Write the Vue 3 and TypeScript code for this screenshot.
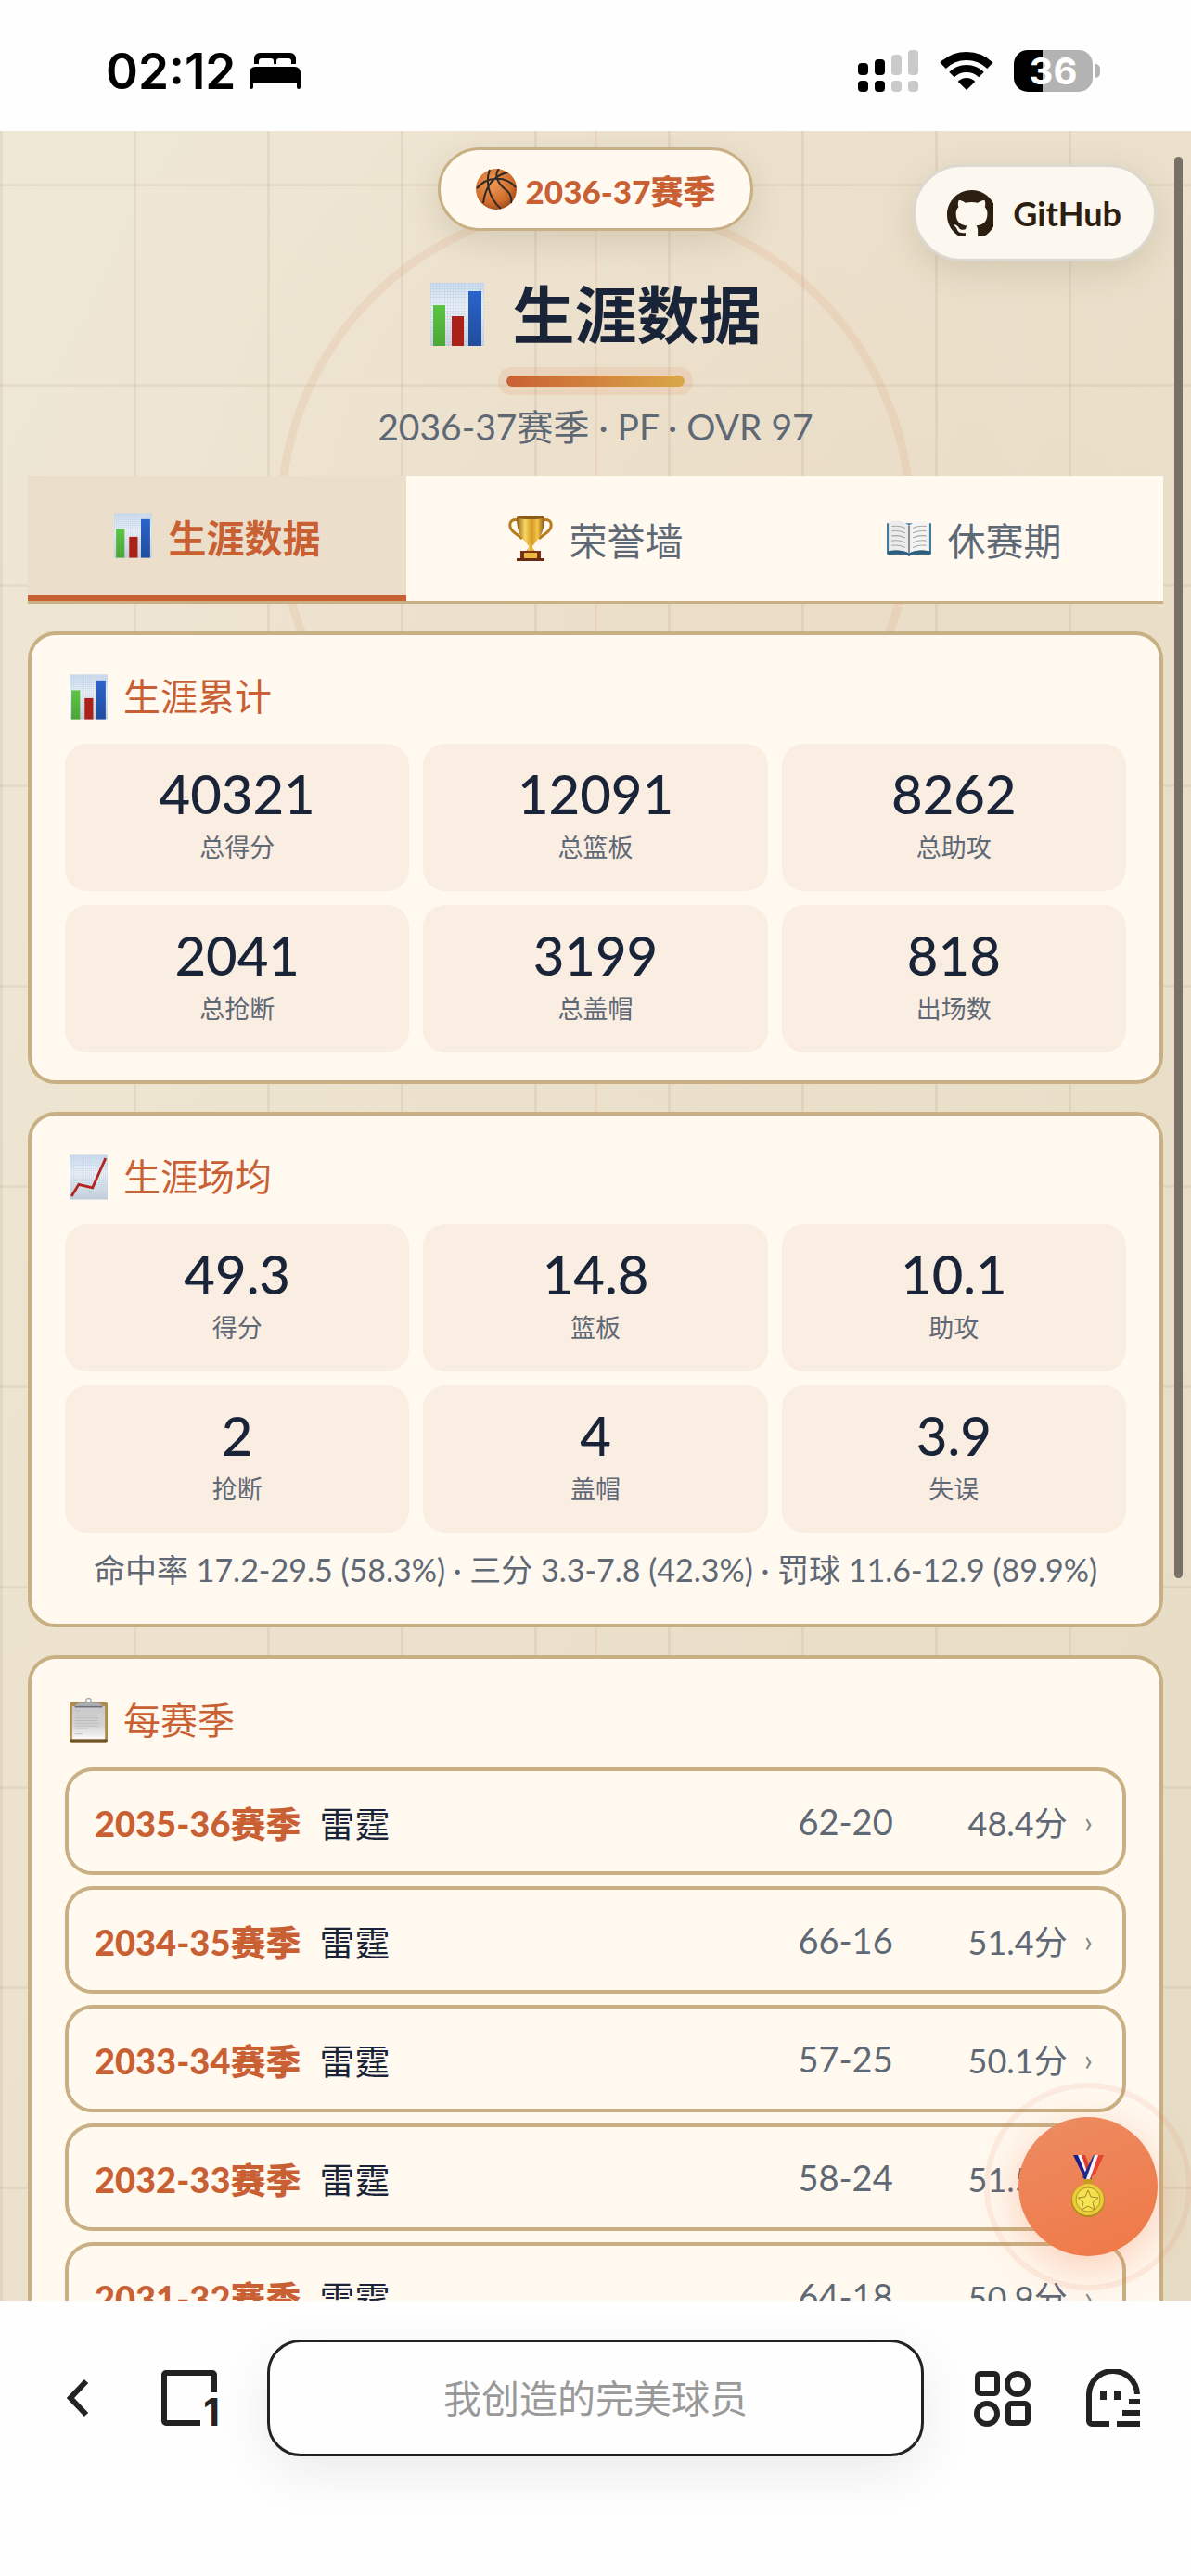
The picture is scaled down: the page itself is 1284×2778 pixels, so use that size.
<script setup lang="ts">
interface Stat {
  value: string
  label: string
}

interface Season {
  name: string
  team: string
  record: string
  points: string
}

interface Tab {
  icon: string
  label: string
}

const tabs: Tab[] = [
  { icon: 'bars', label: '生涯数据' },
  { icon: 'trophy', label: '荣誉墙' },
  { icon: 'book', label: '休赛期' },
]

const totals: Stat[] = [
  { value: '40321', label: '总得分' },
  { value: '12091', label: '总篮板' },
  { value: '8262', label: '总助攻' },
  { value: '2041', label: '总抢断' },
  { value: '3199', label: '总盖帽' },
  { value: '818', label: '出场数' },
]

const averages: Stat[] = [
  { value: '49.3', label: '得分' },
  { value: '14.8', label: '篮板' },
  { value: '10.1', label: '助攻' },
  { value: '2', label: '抢断' },
  { value: '4', label: '盖帽' },
  { value: '3.9', label: '失误' },
]

const seasons: Season[] = [
  { name: '2035-36赛季', team: '雷霆', record: '62-20', points: '48.4分' },
  { name: '2034-35赛季', team: '雷霆', record: '66-16', points: '51.4分' },
  { name: '2033-34赛季', team: '雷霆', record: '57-25', points: '50.1分' },
  { name: '2032-33赛季', team: '雷霆', record: '58-24', points: '51.5分' },
  { name: '2031-32赛季', team: '雷霆', record: '64-18', points: '50.9分' },
]
</script>

<template>
  <div class="phone">
    <svg class="sprite" aria-hidden="true">
      <defs>
        <linearGradient id="paper" x1="0" y1="0" x2="0" y2="1">
          <stop offset="0" stop-color="#cddcec" />
          <stop offset="0.4" stop-color="#eef2f8" />
          <stop offset="1" stop-color="#c9d0da" />
        </linearGradient>
        <pattern id="mesh" width="3" height="3" patternUnits="userSpaceOnUse">
          <path d="M0 0H3M0 0V3" stroke="#a9c3df" stroke-width="1" opacity="0.6" />
        </pattern>
        <linearGradient id="green" x1="0" y1="0" x2="0" y2="1">
          <stop offset="0" stop-color="#5cc544" /><stop offset="1" stop-color="#4aa636" />
        </linearGradient>
        <linearGradient id="blue" x1="0" y1="0" x2="0" y2="1">
          <stop offset="0" stop-color="#2a64cc" /><stop offset="1" stop-color="#214c9c" />
        </linearGradient>
        <radialGradient id="ball" cx="0.4" cy="0.35" r="0.7">
          <stop offset="0" stop-color="#f09a55" /><stop offset="0.7" stop-color="#cf6c2c" />
          <stop offset="1" stop-color="#9c4718" />
        </radialGradient>
        <linearGradient id="gold" x1="0" y1="0" x2="1" y2="0">
          <stop offset="0" stop-color="#8f5a10" /><stop offset="0.3" stop-color="#f7d765" />
          <stop offset="0.55" stop-color="#d99a24" /><stop offset="0.75" stop-color="#f3c74c" />
          <stop offset="1" stop-color="#85500d" />
        </linearGradient>
        <linearGradient id="sheet" x1="0" y1="0" x2="0" y2="1">
          <stop offset="0" stop-color="#c9c9c9" /><stop offset="0.6" stop-color="#d4d4d4" />
          <stop offset="1" stop-color="#fafafa" />
        </linearGradient>
      </defs>

      <symbol id="icon-bars" viewBox="0 0 58 68">
        <rect width="58" height="68" fill="url(#paper)" />
        <rect width="58" height="68" fill="url(#mesh)" />
        <rect x="3" y="24" width="13" height="44" fill="url(#green)" />
        <rect x="23" y="36" width="13" height="32" fill="#ab2118" />
        <rect x="41" y="9" width="14" height="59" fill="url(#blue)" />
      </symbol>

      <symbol id="icon-line" viewBox="0 0 58 68">
        <rect width="58" height="68" fill="url(#paper)" />
        <rect width="58" height="68" fill="url(#mesh)" />
        <path d="M3 63L14 45L35 50L55 5" fill="none" stroke="#b3241c" stroke-width="4" />
      </symbol>

      <symbol id="icon-clip" viewBox="0 0 58 68">
        <rect y="6" width="58" height="62" rx="3" fill="#b08a4a" />
        <rect x="0" y="62" width="58" height="6" rx="3" fill="#6f5526" />
        <rect x="4" y="12" width="50" height="50" fill="url(#sheet)" />
        <path d="M8 19h8M8 26h34M8 30h36M8 34h35M8 38h37M8 42h36M8 46h20M8 54h12" stroke="#b4b4b4" stroke-width="1" />
        <circle cx="29" cy="4" r="4" fill="none" stroke="#9fb0bd" stroke-width="2" />
        <path d="M8 14c0-5 4-7 9-7h24c5 0 9 2 9 7z" fill="#a9adb6" />
        <path d="M8 13h42" stroke="#6b6e75" stroke-width="2" />
      </symbol>

      <symbol id="icon-trophy" viewBox="0 0 48 49">
        <path d="M11 5C4 3 1 7 2 12c1 6 8 8 13 13M37 5c7-2 10 2 9 7-1 6-8 8-13 13" fill="none" stroke="#b67a1b" stroke-width="3" />
        <path d="M9 2h30c0 12-3 20-9 26l-4 5h-4l-4-5C12 22 9 14 9 2z" fill="url(#gold)" />
        <ellipse cx="24" cy="2" rx="15" ry="2" fill="#8a5a16" />
        <path d="M22 31h4v3l3 5H19l3-5z" fill="url(#gold)" />
        <path d="M13 38h22v9H13z" fill="#7a3015" />
        <rect x="17" y="40" width="14" height="6" fill="#e8b83d" />
        <rect x="9" y="46" width="30" height="3" fill="#6a2a13" />
      </symbol>

      <symbol id="icon-book" viewBox="0 0 46 37">
        <path d="M0 3h46v32H27l-4 2-4-2H0z" fill="#3c7c9f" />
        <path d="M2 1c8-2 16 0 21 4v29c-5-3-13-4-21-2z" fill="#ececec" />
        <path d="M44 1c-8-2-16 0-21 4v29c5-3 13-4 21-2z" fill="#f4f4f4" />
        <path d="M23 5v29" stroke="#8c8c8c" stroke-width="2" />
        <path d="M5 6q8-1 14 2M5 11q8-1 14 2M5 16q8-1 14 2M5 21q8-1 14 2M5 26q8-1 14 2M27 8q6-3 14-2M27 13q6-3 14-2M27 18q6-3 14-2M27 23q6-3 14-2M27 28q6-3 14-2" fill="none" stroke="#a6a6a6" stroke-width="1" />
        <path d="M1 32c8-2 16-1 22 2 6-3 14-4 22-2v3H27l-4 2-4-2H1z" fill="#2b5f7d" />
      </symbol>

      <symbol id="icon-ball" viewBox="0 0 44 44">
        <circle cx="22" cy="22" r="22" fill="url(#ball)" />
        <path d="M1 21C12 8 32 7 43 20M15 1C10 14 14 32 27 43M25 0c-7 8 1 18 9 24 3 3 5 7 4 13M8 37C10 20 18 8 34 4" fill="none" stroke="#2f2a26" stroke-width="2" />
      </symbol>

      <symbol id="icon-medal" viewBox="0 0 36 68">
        <path d="M2 0h10l10 26-6 3z" fill="#1b1f86" /><path d="M7 0h5l9 25-3 1z" fill="#f4f4f4" />
        <path d="M11 0h4l5 14-2 8z" fill="#e23a2e" />
        <path d="M34 0H24L12 24l5 4z" fill="#202a8c" /><path d="M25 0h6L20 26l-4 0z" fill="#f4f4f4" />
        <path d="M29 0h6l-9 20-6 6z" fill="#e8432f" />
        <rect x="13" y="26" width="10" height="5" rx="2" fill="#c99b25" />
        <circle cx="18" cy="49" r="18" fill="#b08a1e" />
        <circle cx="18" cy="48" r="17" fill="#e9cd38" />
        <circle cx="18" cy="48" r="13" fill="#f3e14e" stroke="#b9952a" stroke-width="1" />
        <path d="M18 38l3 7 8 1-6 5 2 8-7-4-7 4 2-8-6-5 8-1z" fill="#f6e653" stroke="#a68528" stroke-width="1" />
      </symbol>
    </svg>

    <header class="status">
      <div class="status-side">
        <time class="clock">02:12</time>
        <svg class="bed" viewBox="0 0 55 39" aria-label="睡眠模式">
          <path d="M5 12V6a6 6 0 0 1 6-6h33a6 6 0 0 1 6 6v6h-5V9a3 3 0 0 0-3-3H32a3 3 0 0 0-3 3v3h-3V9a3 3 0 0 0-3-3H13a3 3 0 0 0-3 3v3z" />
          <path d="M0 21a6 6 0 0 1 6-6h43a6 6 0 0 1 6 6v16a2 2 0 0 1-4 0v-4H4v4a2 2 0 0 1-4 0z" />
        </svg>
      </div>
      <div class="status-side">
        <svg class="signal" viewBox="0 0 65 45" aria-label="信号">
          <g fill="#000">
            <rect x="0" y="14" width="11" height="13" rx="4" /><rect x="18" y="10" width="11" height="17" rx="4" />
            <rect x="0" y="33" width="11" height="12" rx="4" /><rect x="18" y="33" width="11" height="12" rx="4" />
          </g>
          <g fill="#cacaca">
            <rect x="36" y="5" width="11" height="22" rx="4" /><rect x="54" y="0" width="11" height="27" rx="4" />
            <rect x="36" y="33" width="11" height="12" rx="4" /><rect x="54" y="33" width="11" height="12" rx="4" />
          </g>
        </svg>
        <svg class="wifi" viewBox="0 0 58 43" aria-label="无线网络">
          <path d="M3.600 15.700A36.500 36.500 0 0 1 54.400 15.700" fill="none" stroke="#000" stroke-width="9" />
          <path d="M13 25.500A23 23 0 0 1 45 25.500" fill="none" stroke="#000" stroke-width="8" />
          <path d="M29 42L19.700 33A13 13 0 0 1 38.300 33z" />
        </svg>
        <div class="battery"><span class="cell">36</span><span class="nub"></span></div>
      </div>
    </header>

    <main class="page">
      <div class="court" aria-hidden="true"></div>

      <a class="github" href="#">
        <svg viewBox="0 0 92 92" aria-hidden="true">
          <path d="M48.854 0C21.839 0 0 22 0 49.217c0 21.756 13.993 40.172 33.405 46.69 2.427.49 3.316-1.059 3.316-2.362 0-1.141-.08-5.052-.08-9.127-13.59 2.934-16.42-5.867-16.42-5.867-2.184-5.704-5.42-7.17-5.42-7.17-4.448-3.015.324-3.015.324-3.015 4.934.326 7.523 5.052 7.523 5.052 4.367 7.496 11.404 5.378 14.235 4.074.404-3.178 1.699-5.378 3.074-6.6-10.839-1.141-22.243-5.378-22.243-24.283 0-5.378 1.94-9.778 5.014-13.2-.485-1.222-2.184-6.275.486-13.038 0 0 4.125-1.304 13.426 5.052a46.97 46.97 0 0 1 12.214-1.63c4.125 0 8.33.571 12.213 1.63 9.302-6.356 13.427-5.052 13.427-5.052 2.67 6.763.97 11.816.485 13.038 3.155 3.422 5.015 7.822 5.015 13.2 0 18.905-11.404 23.06-22.324 24.283 1.78 1.548 3.316 4.481 3.316 9.126 0 6.6-.08 11.897-.08 13.526 0 1.304.89 2.853 3.316 2.364 19.412-6.52 33.405-24.935 33.405-46.691C97.707 22 75.788 0 48.854 0z" />
        </svg>
        <span>GitHub</span>
      </a>

      <div class="hero">
        <div class="badge">
          <svg class="ball" aria-hidden="true"><use href="#icon-ball" /></svg>
          <span>2036-37赛季</span>
        </div>
        <h1>
          <svg aria-hidden="true"><use href="#icon-bars" /></svg>
          <span>生涯数据</span>
        </h1>
        <div class="rule"></div>
        <p class="subtitle">2036-37赛季 · PF · OVR 97</p>
      </div>

      <nav class="tabs" role="tablist">
        <button
          v-for="(tab, i) in tabs"
          :key="tab.label"
          type="button"
          role="tab"
          :class="['tab', { active: i === 0 }]"
          :aria-selected="i === 0"
        >
          <svg :class="['tab-icon', tab.icon]" aria-hidden="true"><use :href="`#icon-${tab.icon}`" /></svg>
          <span>{{ tab.label }}</span>
        </button>
      </nav>

      <section class="card">
        <h2><svg aria-hidden="true"><use href="#icon-bars" /></svg><span>生涯累计</span></h2>
        <dl class="stats">
          <div v-for="s in totals" :key="s.label" class="stat">
            <dd>{{ s.value }}</dd>
            <dt>{{ s.label }}</dt>
          </div>
        </dl>
      </section>

      <section class="card">
        <h2><svg aria-hidden="true"><use href="#icon-line" /></svg><span>生涯场均</span></h2>
        <dl class="stats">
          <div v-for="s in averages" :key="s.label" class="stat">
            <dd>{{ s.value }}</dd>
            <dt>{{ s.label }}</dt>
          </div>
        </dl>
        <p class="shooting">命中率 17.2-29.5 (58.3%) · 三分 3.3-7.8 (42.3%) · 罚球 11.6-12.9 (89.9%)</p>
      </section>

      <section class="card">
        <h2><svg aria-hidden="true"><use href="#icon-clip" /></svg><span>每赛季</span></h2>
        <div class="seasons">
          <button v-for="s in seasons" :key="s.name" type="button" class="season">
            <span class="name">{{ s.name }}</span>
            <span class="team">{{ s.team }}</span>
            <span class="record">{{ s.record }}</span>
            <span class="points">{{ s.points }}</span>
            <span class="more">›</span>
          </button>
        </div>
      </section>

      <button type="button" class="fab" aria-label="成就">
        <svg aria-hidden="true"><use href="#icon-medal" /></svg>
      </button>
      <div class="scrollbar" aria-hidden="true"></div>
    </main>

    <footer class="browser">
      <button type="button" class="tool back" aria-label="返回">
        <svg viewBox="0 0 24 42"><path d="M21 3L4 21L21 39" fill="none" stroke="#222" stroke-width="6" /></svg>
      </button>
      <button type="button" class="tool pages" aria-label="标签页">
        <svg viewBox="0 0 60 60">
          <path d="M57 24V5a2 2 0 0 0-2-2H5a2 2 0 0 0-2 2v50a2 2 0 0 0 2 2h37" fill="none" stroke="#222" stroke-width="6" />
          <text x="63" y="60" text-anchor="end" class="count">1</text>
        </svg>
      </button>
      <input class="address" type="text" placeholder="我创造的完美球员" aria-label="地址栏" />
      <button type="button" class="tool apps" aria-label="应用">
        <svg viewBox="0 0 61 61" fill="none" stroke="#222" stroke-width="6">
          <rect x="4" y="4" width="21" height="21" rx="3" /><circle cx="47" cy="15" r="11" />
          <circle cx="14" cy="47" r="11" /><rect x="37" y="36" width="21" height="21" rx="3" />
        </svg>
      </button>
      <button type="button" class="tool ghost" aria-label="我的">
        <svg viewBox="0 0 58 62">
          <path d="M55 27A26 26 0 0 0 3 29V56a3 3 0 0 0 3 3H25" fill="none" stroke="#222" stroke-width="6" />
          <path d="M15 23h7v10h-7zM30 23h7v10h-7zM46 32h12v6H46zM39 44h19v6H39zM33 56h25v6H33z" fill="#222" />
        </svg>
      </button>
    </footer>
  </div>
</template>

<style>
body {
  margin: 0;
  background: #fefefe;
}
</style>

<style scoped>
.phone {
  --ink: #1a2438;
  --muted: #5f6875;
  --accent: #c96034;
  --tan: #c8b084;
  --cream: #fff9f0;
  display: flex;
  flex-direction: column;
  height: 100vh;
  font-family: Lato, "Noto Sans CJK SC", sans-serif;
  color: var(--ink);
  background: #fefefe;
}
.phone * {
  box-sizing: border-box;
}
button {
  font: inherit;
  color: inherit;
  background: none;
  border: 0;
  padding: 0;
}
.sprite {
  position: absolute;
  width: 0;
  height: 0;
}

/* status bar */
.status {
  flex: none;
  display: flex;
  justify-content: space-between;
  align-items: center;
  height: 141px;
  padding: 12px 98px 0 114px;
}
.status-side {
  display: flex;
  align-items: center;
}
.clock {
  font: 600 53px/60px Inter, sans-serif;
  color: #000;
}
.bed {
  width: 55px;
  height: 39px;
  margin-left: 15px;
}
.signal {
  width: 65px;
  height: 45px;
}
.wifi {
  width: 58px;
  height: 43px;
  margin: 0 22px 0 23px;
}
.battery {
  display: flex;
  align-items: center;
  gap: 3px;
}
.cell {
  width: 85px;
  height: 45px;
  border-radius: 15px;
  background: linear-gradient(90deg, #000 36%, #b3b3b3 36%);
  color: #fff;
  font: 700 40px/45px Inter, sans-serif;
  text-align: center;
}
.nub {
  width: 5px;
  height: 15px;
  border-radius: 0 8px 8px 0;
  background: #b3b3b3;
}

/* page */
.page {
  position: relative;
  flex: 1;
  min-height: 0;
  overflow: hidden;
  padding: 18px 30px 0;
  background:
    linear-gradient(rgba(200, 96, 52, 0.08), rgba(200, 96, 52, 0.08)) center / 3px 100% no-repeat,
    repeating-linear-gradient(90deg, rgba(100, 85, 60, 0.08) 0 3px, transparent 3px 144px),
    repeating-linear-gradient(180deg, transparent 0 57px, rgba(100, 85, 60, 0.07) 57px 60px, transparent 60px 216px),
    radial-gradient(circle at 65% 20%, rgba(225, 150, 110, 0.06), transparent 40%),
    linear-gradient(120deg, #efe8d6 0%, #ece2ce 40%, #e6dcc4 100%);
}
.court {
  position: absolute;
  top: 75px;
  left: 50%;
  width: 688px;
  height: 688px;
  border: 9px solid rgba(215, 120, 70, 0.11);
  border-radius: 50%;
  transform: translateX(-50%);
}
.github {
  position: absolute;
  top: 36px;
  right: 37px;
  display: flex;
  align-items: center;
  gap: 21px;
  height: 105px;
  padding: 0 35px 0 34px;
  border: 3px solid #ddd8cf;
  border-radius: 53px;
  background: #fcf8ef;
  box-shadow: 0 12px 36px rgba(90, 75, 40, 0.15);
  color: #2c1f12;
  font-size: 36px;
  font-weight: 700;
  text-decoration: none;
}
.github svg {
  width: 50px;
  height: 50px;
  fill: #2c1f12;
}
.hero {
  position: relative;
  display: flex;
  flex-direction: column;
  align-items: center;
}
.badge {
  display: flex;
  align-items: center;
  gap: 10px;
  height: 90px;
  padding: 0 38px;
  border: 3px solid var(--tan);
  border-radius: 45px;
  background: var(--cream);
  box-shadow: 0 12px 36px rgba(90, 75, 40, 0.15);
  color: var(--accent);
  font-size: 35px;
  font-weight: 900;
}
.ball {
  width: 44px;
  height: 44px;
}
h1 {
  display: flex;
  align-items: center;
  gap: 31px;
  margin: 50px 0 26px;
  font-size: 67px;
  line-height: 80px;
  font-weight: 700;
}
h1 svg {
  width: 58px;
  height: 68px;
}
.rule {
  width: 192px;
  height: 12px;
  border-radius: 6px;
  background: linear-gradient(90deg, #c96034, #d9a847);
  box-shadow: 0 0 0 9px rgba(220, 120, 70, 0.13);
}
.subtitle {
  margin: 13px 0 23px;
  font-size: 39px;
  line-height: 60px;
  color: var(--muted);
}

.tabs {
  position: relative;
  display: flex;
  height: 138px;
  margin-bottom: 30px;
  border-bottom: 3px solid var(--tan);
  background: var(--cream);
}
.tab {
  flex: 1;
  display: flex;
  align-items: center;
  justify-content: center;
  gap: 18px;
  font-size: 41px;
  color: var(--muted);
}
.tab.active {
  border-bottom: 6px solid var(--accent);
  background: #ebdfcb;
  color: var(--accent);
  font-weight: 700;
}
.tab-icon {
  width: 48px;
  height: 49px;
}
.tab-icon.bars {
  width: 41px;
}

.card {
  position: relative;
  margin-bottom: 30px;
  padding: 36px 36px 30px;
  border: 4px solid var(--tan);
  border-radius: 30px;
  background: var(--cream);
}
h2 {
  display: flex;
  align-items: center;
  gap: 17px;
  margin: 0 5px 21px;
  font-size: 40px;
  line-height: 60px;
  font-weight: 400;
  color: var(--accent);
}
h2 svg {
  width: 41px;
  height: 49px;
}
.stats {
  display: grid;
  grid-template-columns: repeat(3, 1fr);
  gap: 15px;
  margin: 0;
}
.stat {
  display: flex;
  flex-direction: column;
  height: 159px;
  padding-top: 20px;
  border-radius: 24px;
  background: #faede2;
  text-align: center;
}
.stat dd {
  margin: 0;
  font-size: 58px;
  line-height: 68px;
  font-weight: 500;
}
.stat dt {
  font-size: 27px;
  line-height: 48px;
  color: var(--muted);
}
.shooting {
  margin: 12px 0 0;
  font-size: 34px;
  line-height: 56px;
  text-align: center;
  white-space: nowrap;
  color: var(--muted);
}

.seasons {
  display: flex;
  flex-direction: column;
  gap: 12px;
}
.season {
  display: flex;
  align-items: center;
  height: 116px;
  padding: 0 32px 0 28px;
  border: 4px solid var(--tan);
  border-radius: 30px;
  background: var(--cream);
  font-size: 36px;
  color: var(--muted);
}
.name {
  font-size: 38px;
  font-weight: 900;
  color: var(--accent);
}
.team {
  flex: 1;
  margin-left: 20px;
  font-size: 38px;
  text-align: left;
  color: var(--ink);
}
.record {
  font-size: 38px;
}
.points {
  width: 188px;
  text-align: right;
}
.more {
  margin-left: 18px;
  font-size: 33px;
  color: #8a8880;
}

.fab {
  position: absolute;
  right: 36px;
  bottom: 48px;
  display: flex;
  align-items: center;
  justify-content: center;
  width: 150px;
  height: 150px;
  border-radius: 50%;
  background: linear-gradient(160deg, #ec8c62, #f07846);
  box-shadow: 0 12px 48px rgba(240, 120, 70, 0.35);
}
.fab::after {
  content: "";
  position: absolute;
  inset: -37px;
  border: 6px solid rgba(230, 120, 80, 0.1);
  border-radius: 50%;
}
.fab svg {
  width: 36px;
  height: 68px;
}
.scrollbar {
  position: absolute;
  top: 28px;
  right: 9px;
  width: 9px;
  height: 1533px;
  border-radius: 5px;
  background: #777165;
}

/* browser toolbar */
.browser {
  flex: none;
  display: flex;
  align-items: center;
  height: 297px;
  padding: 0 55px 87px 72px;
  background: #fefefe;
}
.tool svg {
  display: block;
  width: 100%;
  height: 100%;
}
.back {
  width: 24px;
  height: 42px;
}
.pages {
  width: 60px;
  height: 60px;
  margin: 0 54px 0 78px;
}
.pages svg {
  overflow: visible;
}
.count {
  font: 700 41px Inter, sans-serif;
  fill: #222;
}
.address {
  flex: 1;
  min-width: 0;
  height: 126px;
  border: 3px solid #222;
  border-radius: 36px;
  background: #fefefe;
  box-shadow: 0 18px 60px rgba(0, 0, 0, 0.08);
  font: 400 41px Lato, "Noto Sans CJK SC", sans-serif;
  text-align: center;
}
.address::placeholder {
  color: #999;
}
.apps {
  width: 61px;
  height: 61px;
  margin: 0 60px 0 54px;
}
.ghost {
  width: 58px;
  height: 62px;
}
</style>
